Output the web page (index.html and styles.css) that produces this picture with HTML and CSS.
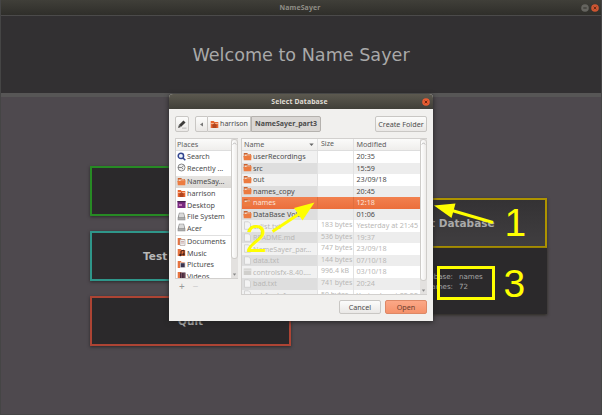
FILE: index.html
```html
<!DOCTYPE html>
<html lang="en">
<head>
<meta charset="utf-8">
<title>NameSayer</title>
<link rel="stylesheet" href="styles.css">
</head>
<body>
<svg width="0" height="0" class="defs">
  <symbol id="folder" viewBox="0 0 9 9"><path d="M.8 1h3.400l.8 1h3v3H.8z" fill="#c9622f"/><path d="M1.500 2.500h6v2h-6z" fill="#f3d9c9"/><path d="M.4 4h2.800l.8-.8h4.600L8.200 8.200H.8z" fill="#ec7b40"/></symbol>
  <symbol id="home" viewBox="0 0 9 9"><path d="M.7 1h3l1 1h3.600v6H.7z" fill="#e5652f"/><path d="M1 3h7v1H1z" fill="#f7b28c"/><path d="M4.500 3 7.300 5.500h-.8V8h-4V5.500h-.8z" fill="#b0451f"/></symbol>
  <symbol id="desktop" viewBox="0 0 9 9"><path d="M.5 1h8v7h-8z" fill="#792a80"/><path d="M.5 1h8v1.200h-8z" fill="#46224b"/><path d="M2 4h3v2H2z" fill="#c377b5"/></symbol>
  <symbol id="drive" viewBox="0 0 9 9"><path d="M2 .8h5l1.300 5v2.500H.7V5.800z" fill="#8c8c8c"/><path d="M2.500 1.300h4l.8 4H1.700z" fill="#d9d9d9"/><path d="M1.300 6.300h6.400v1.200H1.300z" fill="#b9b9b9"/></symbol>
  <symbol id="search" viewBox="0 0 9 9"><circle cx="3.900" cy="3.900" r="2.700" fill="#eef3fb" stroke="#34468f" stroke-width="1.500"/><path d="m6 6 2.300 2.300" stroke="#34468f" stroke-width="1.600"/></symbol>
  <symbol id="recent" viewBox="0 0 9 9"><circle cx="4.500" cy="4.500" r="3.500" fill="#eee" stroke="#888" stroke-width="1"/><path d="M1 4.500h3.700l2-2M4.500 4.500 6 6" fill="none" stroke="#777" stroke-width=".9"/></symbol>
  <symbol id="docs" viewBox="0 0 9 9"><path d="M.7 1h3l1 1h3v6h-7z" fill="#e5733f"/><path d="M3 2.500h5v6H3z" fill="#eee" stroke="#a99" stroke-width=".6"/><path d="M4 4.500h3M4 6h3" stroke="#b88" stroke-width=".6"/></symbol>
  <symbol id="music" viewBox="0 0 9 9"><path d="M.7 1h3l1 1h3.500v6H.7z" fill="#e5733f"/><path d="M4 7V3l3-.8v4" fill="none" stroke="#43201b" stroke-width="1"/><circle cx="3.400" cy="7" r="1.200" fill="#43201b"/><circle cx="6.500" cy="6.400" r="1.200" fill="#43201b"/></symbol>
  <symbol id="pics" viewBox="0 0 9 9"><path d="M.7 1h3l1 1h3v6h-7z" fill="#e5733f"/><path d="M3 2.500h5.500v5.500H3z" fill="#ddd"/><path d="M3.700 3.200h4v4h-4z" fill="#3a3551"/></symbol>
  <symbol id="video" viewBox="0 0 9 9"><path d="M.7 1h3l1 1h3v6h-7z" fill="#e5733f"/><path d="M3 1.500h5.500v7H3z" fill="#482c3c"/><path d="M4.500 1.500v7M7.200 1.500v7" stroke="#a78" stroke-width=".5"/></symbol>
  <symbol id="file" viewBox="0 0 9 9"><path d="M1.500.8h4l2 2v5.500h-6z" fill="#f3f3f3" stroke="#c9c9c9" stroke-width=".7"/></symbol>
  <symbol id="archive" viewBox="0 0 9 9"><path d="M.7 1.500h7.600v6.500H.7z" fill="#d0cfcc"/><path d="M.7 3.200h7.600" stroke="#eee" stroke-width=".8"/></symbol>
  <symbol id="close" viewBox="0 0 8 8"><circle cx="4" cy="4" r="3.800" fill="#e85c32"/><path d="m2.700 2.700 2.600 2.600m0-2.600L2.700 5.300" stroke="#74270f" stroke-width="1"/></symbol>
</svg>

<div class="app">
  <header class="bar app-bar">
    <span>NameSayer</span>
    <div class="controls">
      <svg viewBox="0 0 8 8"><circle cx="4" cy="4" r="3.800" fill="#65645f"/><path d="M2.300 4h3.400" stroke="#32312d" stroke-width="1"/></svg>
      <svg class="dim"><use href="#close"/></svg>
    </div>
  </header>
  <h1 class="hero">Welcome to Name Sayer</h1>
  <main class="content">
    <div class="left">
      <button class="tile green"></button>
      <button class="tile teal"><span>Test</span></button>
      <button class="tile red">Quit</button>
    </div>
    <div class="right">
      <button class="tile gold">Select Database</button>
      <dl class="info">
        <dt>Database:</dt><dd>names</dd>
        <dt>Names:</dt><dd>72</dd>
      </dl>
    </div>
  </main>
</div>

<section class="dialog">
  <header class="bar dialog-bar"><span>Select Database</span><div class="controls"><svg><use href="#close"/></svg></div></header>
  <div class="tools">
    <button class="btn pencil"><svg viewBox="0 0 9 9"><path d="M1 8 1.700 5.500 5.800 1.300 7.700 3.200 3.500 7.300z" fill="#3c3b39"/><path d="m2 5.800 1.200 1.200" stroke="#ddd" stroke-width=".6"/><path d="M4.500 8.200h4" stroke="#aaa" stroke-width=".7"/></svg></button>
    <div class="path">
      <button class="btn back"><svg viewBox="0 0 5 5"><path d="M4 .5v4L1 2.500z" fill="#777"/></svg></button>
      <button class="btn crumb"><svg><use href="#home"/></svg><span>harrison</span></button>
      <button class="btn current"><span>NameSayer_part3</span></button>
    </div>
    <button class="btn create"><span>Create Folder</span></button>
  </div>
  <div class="panes">
    <div class="side">
      <div class="frame places">
        <div class="list">
          <div class="head">Places</div>
          <ul>
            <li><svg><use href="#search"/></svg>Search</li>
            <li><svg><use href="#recent"/></svg>Recently ...</li>
            <li class="active"><svg><use href="#folder"/></svg>NameSay...</li>
            <li><svg><use href="#home"/></svg>harrison</li>
            <li><svg><use href="#desktop"/></svg>Desktop</li>
            <li><svg><use href="#drive"/></svg>File System</li>
            <li><svg><use href="#drive"/></svg>Acer</li>
            <li class="split"><svg><use href="#docs"/></svg>Documents</li>
            <li><svg><use href="#music"/></svg>Music</li>
            <li><svg><use href="#pics"/></svg>Pictures</li>
            <li><svg><use href="#video"/></svg>Videos</li>
          </ul>
        </div>
        <div class="scroll"><i class="thumb side-thumb"><svg viewBox="0 0 5 5"><path d="m.8 3.500 1.700-1.700 1.700 1.700" fill="none" stroke="#aaa" stroke-width=".8"/></svg></i><svg viewBox="0 0 5 5"><path d="M.8 1.500h3.400L2.500 3.800z" fill="#888"/></svg></div>
      </div>
      <div class="addremove"><span>+</span><span class="off">−</span></div>
    </div>
    <div class="frame files">
      <div class="list">
        <div class="row head"><span>Name<svg viewBox="0 0 5 5"><path d="M.3 1.500h4.400L2.500 4z" fill="#666"/></svg></span><span>Size</span><span>Modified</span></div>
        <div class="row"><span><svg><use href="#folder"/></svg><b>userRecordings</b></span><span></span><span>20:35</span></div>
        <div class="row alt"><span><svg><use href="#folder"/></svg><b>src</b></span><span></span><span>15:59</span></div>
        <div class="row"><span><svg><use href="#folder"/></svg><b>out</b></span><span></span><span>23/09/18</span></div>
        <div class="row alt"><span><svg><use href="#folder"/></svg><b>names_copy</b></span><span></span><span>20:45</span></div>
        <div class="row sel"><span><svg><use href="#folder"/></svg><b>names</b></span><span></span><span>12:18</span></div>
        <div class="row alt"><span><svg><use href="#folder"/></svg><b>DataBase Vol....</b></span><span></span><span>01:06</span></div>
        <div class="row off"><span><svg><use href="#file"/></svg><b>sxlist.txt</b></span><span>183 bytes</span><span>Yesterday at 21:45</span></div>
        <div class="row alt off"><span><svg><use href="#file"/></svg><b>README.md</b></span><span>536 bytes</span><span>19:37</span></div>
        <div class="row off"><span><svg><use href="#file"/></svg><b>NameSayer_par...</b></span><span>747 bytes</span><span>23/09/18</span></div>
        <div class="row alt off"><span><svg><use href="#file"/></svg><b>data.txt</b></span><span>144 bytes</span><span>07/10/18</span></div>
        <div class="row off"><span><svg><use href="#archive"/></svg><b>controlsfx-8.40....</b></span><span>996.4 kB</span><span>03/10/18</span></div>
        <div class="row alt off"><span><svg><use href="#file"/></svg><b>bad.txt</b></span><span>741 bytes</span><span>20:24</span></div>
        <div class="row off"><span><svg><use href="#file"/></svg><b>ashfordefg</b></span><span>50 bytes</span><span>Yesterday at 02:52</span></div>
      </div>
      <div class="scroll"><i class="thumb file-thumb"><svg viewBox="0 0 5 5"><path d="m.8 3.500 1.700-1.700 1.700 1.700" fill="none" stroke="#aaa" stroke-width=".8"/></svg></i><svg viewBox="0 0 5 5"><path d="M.8 1.500h3.400L2.500 3.800z" fill="#888"/></svg></div>
    </div>
  </div>
  <footer class="actions"><button class="btn">Cancel</button><button class="btn open">Open</button></footer>
</section>

<svg class="notes" viewBox="0 0 602 415">
  <path d="M493 222.500 452 210.500" class="line"/>
  <path d="M434 205.500 455.500 203.500 451.500 218z" class="tip"/>
  <path d="M272.500 231.500 302 212" class="line"/>
  <path d="M314.500 202.500 294 208 302.500 220.500z" class="tip"/>
  <rect x="438.500" y="267.500" width="55" height="31" class="line"/>
  <text x="504.500" y="236">1</text>
  <text x="245.500" y="252">2</text>
  <text x="503.500" y="296.500">3</text>
</svg>
</body>
</html>
```
FILE: styles.css
```css
* { box-sizing: border-box; }
body { margin: 0; width: 602px; height: 415px; overflow: hidden; background: #4e494e; font-family: "DejaVu Sans", sans-serif; }
button { font: inherit; color: inherit; padding: 0; margin: 0; }
ul, dl, dd { margin: 0; padding: 0; list-style: none; }
svg { display: block; flex: none; }
.defs { position: absolute; }

.app { height: 415px; display: flex; flex-direction: column; border: 1px solid #454545; border-top: 0; }
.bar { display: flex; align-items: center; justify-content: center; flex: none; font-family: "Noto Sans", sans-serif; font-weight: bold; font-size: 6.900px; line-height: 13px; }
.bar > span { flex: 1; text-align: center; }
.controls { display: flex; gap: 2px; margin-left: -18px; width: 18px; justify-content: flex-end; }
.controls svg { width: 8px; height: 8px; }
.app-bar { height: 15px; padding-right: 2px; background: linear-gradient(#403f39, #2f2e2a); color: #908e86; letter-spacing: .15px; }
.dim { opacity: .85; }
.hero { margin: 0; height: 82px; flex: none; border-top: 1px solid #4b4a4a; border-bottom: 4px solid #575656; background: #323032; color: #a9a9a9; font-size: 17.600px; font-weight: normal; text-align: center; line-height: 78px; }
.content { flex: 1; display: flex; justify-content: space-between; padding: 69px 54px 0 89px; }
.left { display: flex; flex-direction: column; gap: 15px; width: 201px; }
.right { width: 201px; padding-top: 32px; }
.tile { display: block; width: 201px; height: 50px; border: 2px solid; background: #2b292b; font-size: 10.500px; font-weight: bold; box-shadow: 0 1px 3px #2b292b; }
.green { border-color: #278a24; }
.teal { border-color: #2f968a; color: #b8b8b8; text-align: left; padding-left: 51px; }
.red { border-color: #ad4434; color: #b8b8b8; }
.gold { border-color: #ad9300; color: #a9a9a9; background: linear-gradient(#343234, #403e40); }
.info { height: 66px; background: #2b292b; box-shadow: 0 1px 3px #2b2920; display: grid; grid-template-columns: 107px 1fr; column-gap: 6px; grid-auto-rows: 9.500px; align-content: start; padding-top: 24px; font-size: 7.100px; line-height: 9.500px; color: #a5a5a5; }
.info dt { text-align: right; }

.dialog { position: absolute; left: 169px; top: 94px; width: 264px; height: 227px; background: #f1f0ee; border-radius: 4px 4px 0 0; overflow: hidden; box-shadow: 0 1px 5px #222; font-family: "Noto Sans", sans-serif; font-size: 7.200px; color: #4c4c4c; display: flex; flex-direction: column; }
.dialog-bar { height: 15px; padding-right: 3px; background: linear-gradient(#5c594f, #403f39); color: #dfdbd2; letter-spacing: .1px; }
.tools { display: flex; height: 29px; padding: 7px 6px 6px; }
.btn { display: flex; align-items: center; justify-content: center; height: 16px; border: 1px solid #c9c7c4; border-radius: 2px; background: linear-gradient(#fcfcfb, #eae8e6); white-space: nowrap; }
.btn span { margin-top: -1px; }
.pencil { width: 14px; }
.pencil svg { width: 10px; height: 10px; }
.path { display: flex; margin-left: 6px; flex: 1; }
.back { width: 13px; border-radius: 2px 0 0 2px; }
.back svg { width: 5px; height: 5px; }
.crumb { width: 43px; border-radius: 0; border-left: 0; gap: 1px; font-size: 7px; }
.crumb svg { width: 9px; height: 9px; }
.current { width: 70px; background: #dbd8d5; border-color: #b5b2ae; border-radius: 0 2px 2px 0; font-weight: bold; font-size: 7px; }
.create { width: 52px; }

.panes { display: flex; height: 158px; padding-left: 6px; gap: 3px; }
.side { width: 63px; }
.frame { display: flex; background: #fff; overflow: hidden; border: solid #d2d0ce; border-width: 1px 0 1px 1px; }
.places { height: 141px; }
.list { flex: 1; min-width: 0; overflow: hidden; }
.head { height: 12px; line-height: 11px; padding-left: 1px; background: linear-gradient(#fbfbfa, #efeeec); border-bottom: 1px solid #ddd; color: #5d5d5d; }
.places li { display: flex; align-items: center; gap: 1px; height: 11.500px; line-height: 10px; padding: 0 0 1px 1px; white-space: nowrap; }
.places li svg { width: 9px; height: 9px; }
.places .active { margin-top: 1.500px; height: 12.500px; background: linear-gradient(#e6e4e1, #dcdad7); }
.places .split { margin-top: 1px; border-top: 1px solid #e0e0e0; height: 12.500px; }
.scroll { width: 7px; flex: none; background: #e3e1df; display: flex; flex-direction: column; justify-content: space-between; align-items: center; padding-bottom: 1px; }
.scroll svg { width: 5px; height: 5px; }
.thumb { width: 7px; border: 1px solid #cfcdca; border-radius: 3px; background: linear-gradient(90deg, #fff, #eeecea); padding-top: 1px; }
.side-thumb { height: 120px; }
.file-thumb { height: 142px; }
.addremove { display: flex; gap: 8px; padding-left: 4px; font-size: 10px; line-height: 15px; color: #999; }
.addremove .off { color: #ccc; }

.files { width: 186px; height: 157px; }
.row { display: grid; grid-template-columns: 76px 36px 1fr; height: 11.550px; line-height: 10px; white-space: nowrap; }
.row > span { height: 100%; padding-left: 3px; overflow: hidden; border-right: 1px solid #e2e2e2; }
.row > span:last-child { border-right: 0; padding-left: 2.500px; }
.row > span:nth-child(2) { font-size: 7px; line-height: 10.600px; }
.row > span:first-child { display: flex; align-items: center; gap: 1px; padding: 0 0 1px 1px; background: #f1f1f1; }
.row b { font-weight: normal; }
.row svg { width: 9px; height: 9px; }
.row.head { height: 12px; line-height: 11px; padding: 0; }
.row.head > span:first-child { justify-content: space-between; padding: 0 3px 0 2px; background: none; }
.row.head svg { width: 5px; height: 5px; }
.alt { background: #ededed; }
.row.alt > span:first-child { background: #dedede; }
.row.sel, .row.sel > span:first-child { background: linear-gradient(#f2814f, #eb6f3c); color: #fbe3d8; }
.row.sel > span { border-color: #e0703f; }
.off { color: #b9b8b6; }

.actions { display: flex; justify-content: flex-end; gap: 4px; padding: 4px 6px 0 0; }
.actions .btn { width: 42px; height: 14px; }
.actions .open { background: linear-gradient(#fba887, #f5926b); border-color: #dd8866; color: #6d4030; }

.notes { position: absolute; left: 0; top: 0; width: 602px; height: 415px; }
.line { fill: none; stroke: #ffff00; stroke-width: 3; }
.tip { fill: #ffff00; }
.notes text { fill: #ffff00; font: 39px "Liberation Sans", sans-serif; }
```
